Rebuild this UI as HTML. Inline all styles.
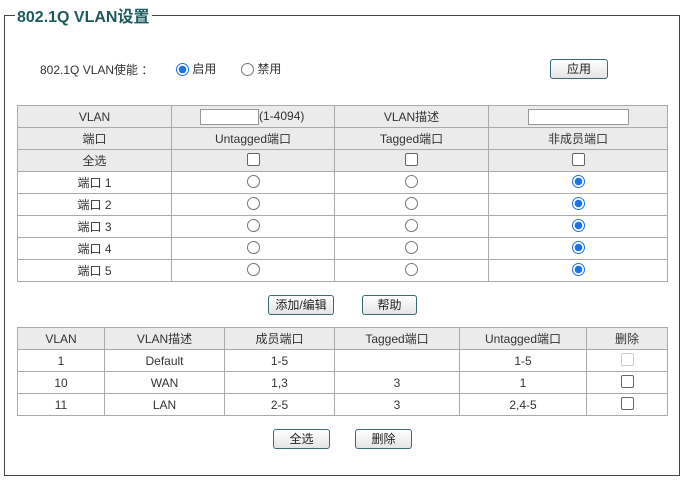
<!DOCTYPE html>
<html><head><meta charset="utf-8"><style>
*{margin:0;padding:0;box-sizing:border-box}
body{width:693px;height:491px;background:#fff;font-family:"Liberation Sans","Noto Sans CJK SC",sans-serif;font-size:12px;color:#333;position:relative;overflow:hidden}
.fs{position:absolute;left:4px;top:15px;width:676px;height:461px;border:1px solid #444}
.lg{position:absolute;left:15px;top:3px;background:#fff;padding:0 2px;font-size:16px;font-weight:bold;color:#1d5a5e}
.abs{position:absolute}
table{position:absolute;border-collapse:collapse;table-layout:fixed}
td{border:1px solid #aaa;text-align:center;height:22px;padding:0;font-size:12px;color:#333;vertical-align:middle}
.g td{background:#ebebeb}
.btn{position:absolute;height:20px;border:1px solid #3c6a73;border-radius:3px;background:linear-gradient(#fff,#e4e4e4);font-size:12px;text-align:center;line-height:18px;color:#222}
.rd{display:inline-block;width:13px;height:13px;border:1px solid #777;border-radius:50%;vertical-align:middle;background:#fff}
td .rd,td .cb{position:relative;top:-2px}
.rd.on{border:1px solid #1a73e8;background:radial-gradient(circle,#1a73e8 0 3.5px,#fff 4px)}
.cb{display:inline-block;width:13px;height:13px;border:1px solid #666;border-radius:2px;vertical-align:middle;background:#fff}
.cb.dis{border-color:#ccc}
.inp{display:inline-block;height:16px;border:1px solid #999;vertical-align:middle;background:#fff}
</style></head><body>
<div class="fs"></div>
<div class="lg">802.1Q VLAN设置</div>
<div class="abs" style="left:40px;top:61px">802.1Q VLAN使能 ：</div>
<div class="abs" style="left:176px;top:60px"><span class="rd on"></span> 启用</div>
<div class="abs" style="left:241px;top:60px"><span class="rd"></span> 禁用</div>
<div class="btn" style="left:550px;top:59px;width:58px">应用</div>

<table style="left:17px;top:105px;width:650px">
<colgroup><col style="width:154px"><col style="width:163px"><col style="width:154px"><col style="width:179px"></colgroup>
<tr class="g"><td>VLAN</td><td style="text-align:left;padding-left:28px"><span class="inp" style="width:59px"></span>(1-4094)</td><td>VLAN描述</td><td><span class="inp" style="width:101px"></span></td></tr>
<tr class="g"><td>端口</td><td>Untagged端口</td><td>Tagged端口</td><td>非成员端口</td></tr>
<tr class="g"><td>全选</td><td><span class="cb"></span></td><td><span class="cb"></span></td><td><span class="cb"></span></td></tr>
<tr><td>端口 1</td><td><span class="rd"></span></td><td><span class="rd"></span></td><td><span class="rd on"></span></td></tr>
<tr><td>端口 2</td><td><span class="rd"></span></td><td><span class="rd"></span></td><td><span class="rd on"></span></td></tr>
<tr><td>端口 3</td><td><span class="rd"></span></td><td><span class="rd"></span></td><td><span class="rd on"></span></td></tr>
<tr><td>端口 4</td><td><span class="rd"></span></td><td><span class="rd"></span></td><td><span class="rd on"></span></td></tr>
<tr><td>端口 5</td><td><span class="rd"></span></td><td><span class="rd"></span></td><td><span class="rd on"></span></td></tr>
</table>

<div class="btn" style="left:268px;top:295px;width:66px">添加/编辑</div>
<div class="btn" style="left:362px;top:295px;width:55px">帮助</div>

<table style="left:17px;top:327px;width:650px">
<colgroup><col style="width:87px"><col style="width:120px"><col style="width:110px"><col style="width:125px"><col style="width:127px"><col style="width:81px"></colgroup>
<tr class="g"><td>VLAN</td><td>VLAN描述</td><td>成员端口</td><td>Tagged端口</td><td>Untagged端口</td><td>删除</td></tr>
<tr><td>1</td><td>Default</td><td>1-5</td><td></td><td>1-5</td><td><span class="cb dis"></span></td></tr>
<tr><td>10</td><td>WAN</td><td>1,3</td><td>3</td><td>1</td><td><span class="cb"></span></td></tr>
<tr><td>11</td><td>LAN</td><td>2-5</td><td>3</td><td>2,4-5</td><td><span class="cb"></span></td></tr>
</table>

<div class="btn" style="left:273px;top:429px;width:57px">全选</div>
<div class="btn" style="left:355px;top:429px;width:57px">删除</div>
</body></html>
